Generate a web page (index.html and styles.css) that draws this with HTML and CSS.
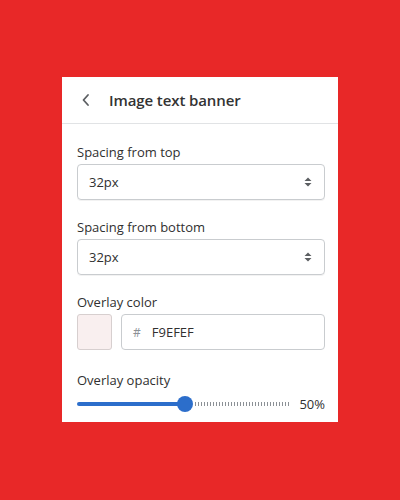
FILE: index.html
```html
<!DOCTYPE html>
<html>
<head>
<meta charset="utf-8">
<link rel="stylesheet" href="styles.css">
</head>
<body>
<div class="panel">
  <div class="header">
    <svg class="back" width="10" height="14" viewBox="0 0 10 14"><path d="M7 2 L2.5 7 L7 12" fill="none" stroke="#5c5f62" stroke-width="1.8" stroke-linecap="round" stroke-linejoin="round"/></svg>
    <span class="title">Image text banner</span>
  </div>
  <div class="body">
    <div class="field">
      <div class="label">Spacing from top</div>
      <div class="select"><span>32px</span>
        <svg width="10" height="12" viewBox="0 0 10 12"><path d="M5 1.5 L8.5 5 H1.5 Z M5 10.5 L8.5 7 H1.5 Z" fill="#5c5f62"/></svg>
      </div>
    </div>
    <div class="field">
      <div class="label">Spacing from bottom</div>
      <div class="select"><span>32px</span>
        <svg width="10" height="12" viewBox="0 0 10 12"><path d="M5 1.5 L8.5 5 H1.5 Z M5 10.5 L8.5 7 H1.5 Z" fill="#5c5f62"/></svg>
      </div>
    </div>
    <div class="field wide">
      <div class="label">Overlay color</div>
      <div class="color-row">
        <div class="swatch"></div>
        <div class="hex"><span class="hash">#</span><span>F9EFEF</span></div>
      </div>
    </div>
    <div class="field last">
      <div class="label">Overlay opacity</div>
      <div class="slider-row">
        <div class="slider">
          <div class="fill"></div>
          <div class="thumb"></div>
          <div class="rest"></div>
        </div>
        <span class="value">50%</span>
      </div>
    </div>
  </div>
</div>
</body>
</html>
```
FILE: styles.css
```css
html, body {
  margin: 0;
  padding: 0;
}
body {
  background: #e82828;
  width: 400px;
  height: 500px;
  font-family: "Open Sans", "Noto Sans", sans-serif;
  color: #303030;
  padding-top: 77px;
  box-sizing: border-box;
}
.panel {
  margin-left: 62px;
  width: 276px;
  height: 345px;
  background: #fff;
}
.header {
  height: 47px;
  border-bottom: 1px solid #e1e3e5;
  display: flex;
  align-items: center;
  padding-left: 19px;
  box-sizing: border-box;
}
.back {
  margin-right: 18px;
}
.title {
  font-size: 15px;
  font-weight: 600;
  color: #333;
  letter-spacing: -0.1px;
}
.body {
  padding: 18px 13px 0 15px;
}
.field {
  margin-bottom: 17px;
}
.field.wide {
  margin-bottom: 20px;
}
.label {
  font-size: 13px;
  line-height: 20px;
  margin-bottom: 2px;
  color: #303030;
}
.select {
  height: 36px;
  box-sizing: border-box;
  border: 1px solid #c9cccf;
  border-radius: 4px;
  display: flex;
  align-items: center;
  justify-content: space-between;
  padding: 0 11px 0 11px;
  font-size: 13px;
  box-shadow: 0 1px 0 rgba(0,0,0,0.05);
}
.color-row {
  display: flex;
  gap: 9px;
  height: 36px;
}
.swatch {
  width: 35px;
  box-sizing: border-box;
  background: #f9efef;
  border: 1px solid #d7cfcf;
  border-radius: 3px;
}
.hex {
  flex: 1;
  box-sizing: border-box;
  border: 1px solid #c9cccf;
  border-radius: 4px;
  display: flex;
  align-items: center;
  padding-left: 11px;
  font-size: 13px;
}
.hash {
  color: #8c9196;
  font-size: 12px;
  margin-right: 11px;
}
.slider-row {
  display: flex;
  align-items: center;
  height: 24px;
}
.slider {
  flex: 1;
  display: flex;
  align-items: center;
  margin-right: 10px;
}
.fill {
  width: 101px;
  height: 4px;
  background: #2c6ecb;
  border-radius: 2px 0 0 2px;
}
.thumb {
  width: 16px;
  height: 16px;
  border-radius: 50%;
  background: #2c6ecb;
  margin-left: -1px;
  margin-right: 2px;
}
.rest {
  flex: 1;
  height: 4px;
  background: repeating-linear-gradient(to right, #8c9196 0 1px, transparent 1px 3px);
}
.value {
  font-size: 13px;
  color: #303030;
}
```
